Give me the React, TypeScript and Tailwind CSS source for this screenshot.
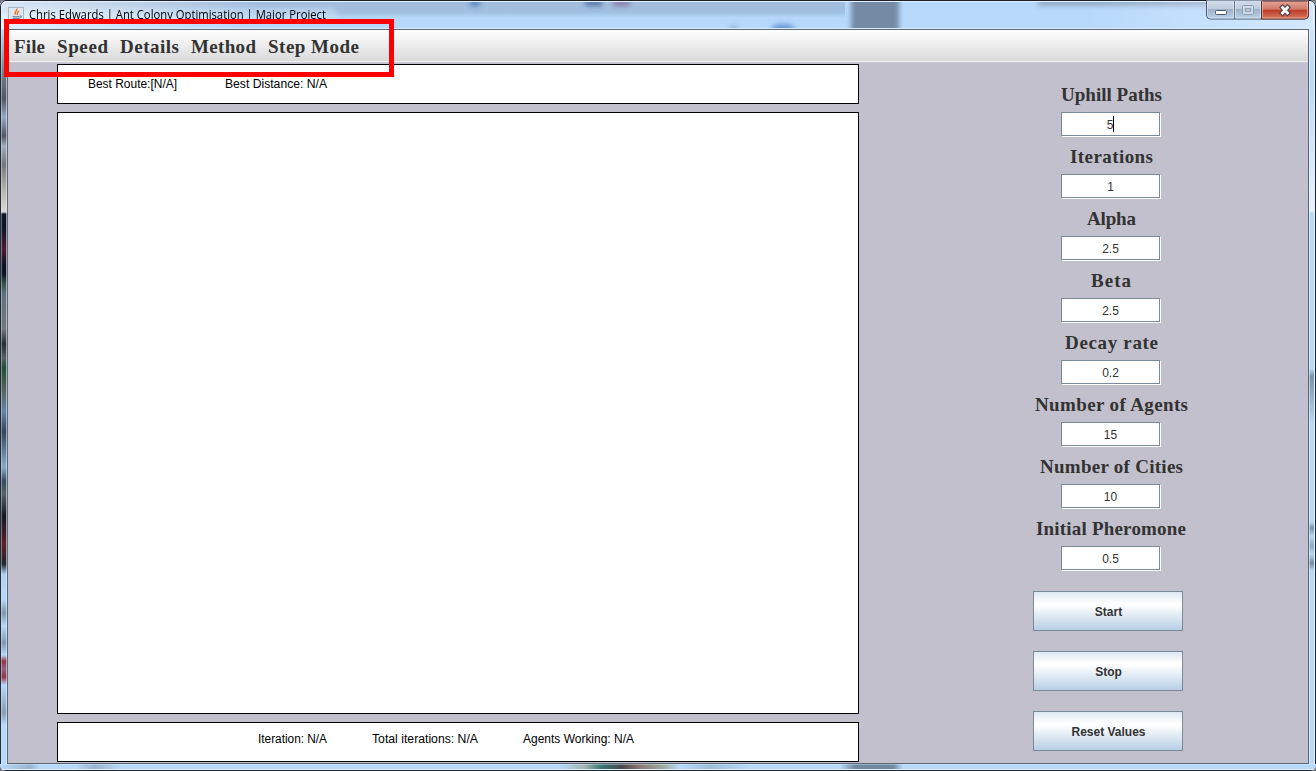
const fields: [string, string, number][] = [
  ["Uphill Paths", "5", 101],
  ["Iterations", "1", 83],
  ["Alpha", "2.5", 49],
  ["Beta", "2.5", 40],
  ["Decay rate", "0.2", 93],
  ["Number of Agents", "15", 153],
  ["Number of Cities", "10", 143],
  ["Initial Pheromone", "0.5", 150],
];

const menus: [string, number][] = [
  ["File", 31],
  ["Speed", 51],
  ["Details", 59],
  ["Method", 65],
  ["Step Mode", 91],
];

function FitText({ text, width, size, family, bold, fill, spacing }: {
  text: string; width: number; size: number; family: string; bold?: boolean; fill: string; spacing?: boolean;
}) {
  return (
    <svg className="block shrink-0 overflow-visible" width={width} height="20">
      <text x="0" y="15" textLength={width} lengthAdjust={spacing ? "spacing" : "spacingAndGlyphs"}
        fontFamily={family} fontSize={size} fontWeight={bold ? 700 : 400} fill={fill}>{text}</text>
    </svg>
  );
}

const serif = "'Liberation Serif', serif";
const sans = "'Liberation Sans', sans-serif";

function JavaIcon() {
  return (
    <svg className="block" width="16" height="16" viewBox="0 0 16 16">
      <rect x=".5" y=".5" width="15" height="15" fill="#dfe6ed" stroke="#a9b6c5" />
      <path d="M9 1.500c1 2-3.500 3-1.500 6M11 4C8.500 5.500 10 6 9 8" fill="none" stroke="#e8742c" strokeWidth="1.400" />
      <path d="M4.500 9.200c2 .8 5 .8 7 0M5 11.300c2 .7 4 .7 6 0M3 13.300c3 1 7 1 9.500 0M12 8.800c2.200 0 1.200 2-.8 2.400" fill="none" stroke="#5f7f9f" strokeWidth="1.100" />
    </svg>
  );
}

function TitleBar() {
  return (
    <div className="relative h-[29px] shrink-0 overflow-hidden bg-[#b7d9fc]">
      <svg className="absolute inset-0" width="1316" height="29">
        <defs>
          <linearGradient id="glass" x1="0" y1="0" x2="0" y2="1">
            <stop offset="0" stopColor="#a4bcdf" />
            <stop offset=".42" stopColor="#a1bfdf" />
            <stop offset=".6" stopColor="#b5d7fa" />
            <stop offset="1" stopColor="#b7d9fc" />
          </linearGradient>
          <linearGradient id="shine" x1="0" y1="0" x2="1" y2="0">
            <stop offset="0" stopColor="#fff" stopOpacity=".6" />
            <stop offset="1" stopColor="#fff" stopOpacity="0" />
          </linearGradient>
          <linearGradient id="shineRight" x1="0" y1="0" x2="1" y2="0">
            <stop offset="0" stopColor="#fff" stopOpacity="0" />
            <stop offset="1" stopColor="#fff" stopOpacity=".4" />
          </linearGradient>
          <filter id="soft" x="-50%" y="-50%" width="200%" height="200%"><feGaussianBlur stdDeviation="2.500" /></filter>
        </defs>
        <rect width="845" height="29" fill="url(#glass)" />
        <g filter="url(#soft)">
          <rect x="851" y="-9" width="48" height="48" fill="#758ba5" />
          <rect x="1038" y="-4" width="180" height="10" fill="#93abc9" />
          <ellipse cx="475" cy="3" rx="6" ry="3" fill="#4a80c4" />
          <rect x="585" y="0" width="17" height="6" fill="#5776a8" />
          <rect x="613" y="0" width="17" height="6" fill="#8b7daa" />
          <ellipse cx="783" cy="29" rx="12" ry="5" fill="#6a99d8" />
          <ellipse cx="734" cy="29" rx="5" ry="3" fill="#87aacf" />
          <rect x="20" y="8" width="318" height="14" rx="7" fill="#c7dff6" opacity=".6" />
        </g>
        <rect width="260" height="29" fill="url(#shine)" />
        <rect x="1080" width="236" height="29" fill="url(#shineRight)" />
        <rect width="1316" height="1" fill="#1d202b" />
        <rect y="1" width="1316" height="1" fill="#e5f2ff" />
        <rect y="28" x="7" width="1302" height="1" fill="#dcecfc" />
        <path d="M.5 29V7Q.5.500 7 .5M1315.500 29V7q0-6.500-6.500-6.500" fill="none" stroke="#1d202b" />
        <path d="M1.500 29V8q0-6.500 6.500-6.500M1313.500 29V8q0-6.500-6.500-6.500" fill="none" stroke="#e9f4ff" />
      </svg>
      <div className="absolute left-2 top-[7px]"><JavaIcon /></div>
      <div className="absolute left-[29px] top-[4px]">
        <FitText text="Chris Edwards | Ant Colony Optimisation | Major Project" width={297} size={12} family="'Open Sans', sans-serif" fill="#000" />
      </div>
      <WindowControls />
    </div>
  );
}

function WindowControls() {
  return (
    <svg className="absolute right-[7px] top-0" width="103" height="20" viewBox="0 0 103 20">
      <defs>
        <linearGradient id="wb" x1="0" y1="0" x2="0" y2="1">
          <stop offset="0" stopColor="#d3deeb" /><stop offset=".48" stopColor="#bccbdc" />
          <stop offset=".5" stopColor="#9eb2c8" /><stop offset="1" stopColor="#bdd4eb" />
        </linearGradient>
        <linearGradient id="wr" x1="0" y1="0" x2="0" y2="1">
          <stop offset="0" stopColor="#e5a396" /><stop offset=".46" stopColor="#d17a69" />
          <stop offset=".5" stopColor="#bb3b26" /><stop offset="1" stopColor="#db7b60" />
        </linearGradient>
      </defs>
      <path d="M.5 0v15q0 4 4 4h94q4 0 4-4V0z" fill="url(#wb)" stroke="#465569" />
      <path d="M1.500 1v14q0 3 3 3h23V1M29.500 1v17h25V1" fill="none" stroke="#e3ecf5" strokeOpacity=".7" />
      <path d="M55.500 1h47v14q0 4-4 4h-43z" fill="url(#wr)" stroke="#5b2c32" />
      <path d="M56.500 1v17h42q3 0 3-3V1" fill="none" stroke="#f1b9a8" strokeOpacity=".7" />
      <path d="M28.500 1v18" stroke="#627389" />
      <rect x="9.500" y="10.500" width="11" height="4" rx="1" fill="#fff" stroke="#505966" />
      <rect x="36.500" y="5.500" width="11" height="9" rx="1" fill="#cbd7e4" stroke="#8e9fb1" />
      <rect x="39.500" y="8.500" width="5" height="3" fill="#b6c8da" stroke="#8e9fb1" />
      <path d="M76.500 7.500l5 5.500M81.500 7.500l-5 5.500" stroke="#503f4a" strokeWidth="5" strokeLinecap="square" />
      <path d="M76.500 7.500l5 5.500M81.500 7.500l-5 5.500" stroke="#fff" strokeWidth="2.700" strokeLinecap="square" />
    </svg>
  );
}

const panel = "shrink-0 border border-black bg-white";
const leftEdge = "w-[7px] shrink-0 border-l border-[#222b35] shadow-[inset_1px_0_0_#dfeefc66,inset_-1px_0_0_#dfeefc99] bg-[linear-gradient(180deg,#c9dced_0px,#777c88_45px,#555563_70px,#98a9c2_88px,#555463_107px,#a0aec0_117px,#777_135px,#b5b0aa_160px,#ded8d2_183px,#101425_185px,#111427_200px,#541a2d_220px,#101326_235px,#101326_245px,#355040_254px,#627080_265px,#747775_300px,#292c32_315px,#59615f_329px,#244c34_339px,#576058_360px,#6884a6_382px,#374458_403px,#89abc8_438px,#3b4a60_452px,#576065_465px,#16191f_487px,#5e2029_515px,#20252b_535px,#afd0ee_545px,#b7d9fc_570px,#8295aa_584px,#b7d9fc_597px,#8297af_614px,#b7d9fc_626px,#963442_632px,#96617c_640px,#963442_648px,#b7d9fc_656px,#8b9caf_684px,#b7d9fc_696px)]";

export default function App() {
  return (
    <div className="h-[771px] w-[1316px] overflow-hidden bg-[#77777a]">
      <div className="relative flex h-[771px] w-[1316px] flex-col overflow-hidden rounded-md bg-[#b7d9fc] font-['Liberation_Sans',sans-serif]">
        <TitleBar />
        <div className="flex h-[735px] shrink-0">
          <div className={leftEdge} />
          <main className="flex w-[1302px] shrink-0 flex-col border border-[#5c6875] bg-[#c2c0cd]">
            <nav className="flex h-8 shrink-0 items-start gap-3 border-b border-[#eeeeea] bg-linear-to-b from-white to-[#dadada] pl-[6px] pt-[8px]">
              {menus.map(([m, w]) => <FitText key={m} text={m} width={w} size={19} family={serif} bold fill="#333" spacing />)}
            </nav>
            <div className="flex shrink-0 border-t border-[#cbcbcb]">
              <div className="ml-[49px] flex w-[802px] flex-col gap-2 pt-px">
                <section className={`${panel} flex h-10 gap-[48px] pl-[30px] pt-[8px]`}>
                  <FitText text="Best Route:[N/A]" width={89} size={12} family={sans} fill="#000" />
                  <FitText text="Best Distance: N/A" width={102} size={12} family={sans} fill="#000" />
                </section>
                <section className={`${panel} h-[602px]`} />
                <section className={`${panel} flex h-10 gap-[45px] pl-[200px] pt-[5px]`}>
                  <FitText text="Iteration: N/A" width={69} size={12} family={sans} fill="#000" />
                  <FitText text="Total iterations: N/A" width={106} size={12} family={sans} fill="#000" />
                  <FitText text="Agents Working: N/A" width={111} size={12} family={sans} fill="#000" />
                </section>
              </div>
              <aside className="ml-[173px] flex w-[158px] flex-col items-center pt-[23px]">
                {fields.map(([label, value, width], i) => (
                  <div key={label} className="flex h-[62px] w-full shrink-0 flex-col items-center">
                    <FitText text={label} width={width} size={19} family={serif} bold fill="#333" spacing />
                    <div className="mr-px mt-[6px] flex h-6 w-[99px] items-center justify-center border border-[#7a8a99] bg-white text-[12px] leading-none text-[#333] shadow-[1px_1px_0_#fff]">
                      <span className="pt-px">{value}</span>
                      {i === 0 && <i className="h-4 w-px bg-black" />}
                    </div>
                  </div>
                ))}
                <div className="mr-[6px] mt-[9px] flex flex-col gap-5">
                  {["Start", "Stop", "Reset Values"].map((b) => (
                    <button key={b} className="h-10 w-[150px] border border-[#7a8a99] bg-[linear-gradient(180deg,#dde8f3_0%,#fff_30%,#fff_34%,#b8cfe5_100%)] pl-px pt-px text-[12px] font-bold text-[#333]">{b}</button>
                  ))}
                </div>
              </aside>
            </div>
          </main>
          <div className="w-[7px] shrink-0 border-r border-[#20242b] shadow-[inset_1px_0_0_#e3f1ff99,inset_-1px_0_0_#e3f1ff] bg-[linear-gradient(180deg,#cfe4fb_0px,#b7d9fc_50px,#e9f3ff_182px,#b7d9fc_184px,#b7d9fc_340px,#7893ad_347px,#b7d9fc_395px,#b7d9fc_493px,#7893ad_499px,#b7d9fc_507px,#8ba9c8_517px,#b7d9fc_525px,#738ba3_534px,#b7d9fc_542px)]" />
        </div>
        <div className="h-[7px] shrink-0 border-b border-[#20242b] shadow-[inset_0_1px_0_#e3f1ff66,inset_0_-1px_0_#e3f1ff] bg-[linear-gradient(90deg,#b7d9fc_0px,#98b3cf_30px,#b7d9fc_40px,#b7d9fc_75px,#98b3cf_95px,#b7d9fc_120px,#b7d9fc_560px,#9fb4ae_585px,#367575_602px,#49494b_622px,#8b7770_640px,#a0b0a3_665px,#b7d9fc_680px,#9fbddb_710px,#b7d9fc_750px,#b7d9fc_840px,#7188a3_855px,#7188a3_893px,#b7d9fc_903px)]" />
        <div className="pointer-events-none absolute left-1 top-[19px] h-[58px] w-[390px] border-[5px] border-[#ff0000]" />
      </div>
    </div>
  );
}
